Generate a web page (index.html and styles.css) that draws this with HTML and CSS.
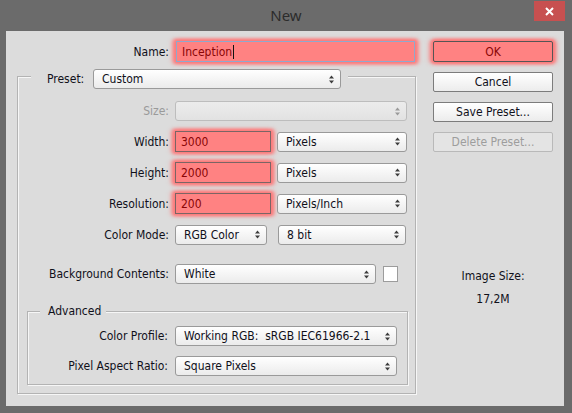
FILE: index.html
```html
<!DOCTYPE html>
<html>
<head>
<meta charset="utf-8">
<title>New</title>
<link rel="stylesheet" href="styles.css">
</head>
<body>
<div class="window">
  <div class="titlebar">
    <span></span>
    <span class="title">New</span>
    <div class="close"><svg width="9" height="9" viewBox="0 0 9 9"><path d="M1 1 L8 8 M8 1 L1 8" stroke="#fff" stroke-width="2"/></svg></div>
  </div>
  <div class="panel">
    <div class="left">
      <div class="row name-row">
        <span class="lbl lbl-name">Name:</span>
        <div class="field hl name-field">Inception<span class="caret"></span></div>
      </div>
      <div class="group preset-group">
        <div class="legend preset-legend">
          <span class="lbl-preset">Preset:</span>
          <div class="select sel-preset"><span>Custom</span><svg class="arr" width="5" height="9" viewBox="0 0 5 9"><path d="M0 3.5 L2.5 0.5 L5 3.5Z M0 5.5 L2.5 8.5 L5 5.5Z"/></svg></div>
        </div>
        <div class="rows">
          <div class="row r20">
            <span class="lbl lbl-g disabled">Size:</span>
            <div class="select sel-size is-disabled"><span></span><svg class="arr" width="5" height="9" viewBox="0 0 5 9"><path d="M0 3.5 L2.5 0.5 L5 3.5Z M0 5.5 L2.5 8.5 L5 5.5Z"/></svg></div>
          </div>
          <div class="row r21">
            <span class="lbl lbl-g">Width:</span>
            <div class="field hl num">3000</div>
            <div class="select sel-unit"><span>Pixels</span><svg class="arr" width="5" height="9" viewBox="0 0 5 9"><path d="M0 3.5 L2.5 0.5 L5 3.5Z M0 5.5 L2.5 8.5 L5 5.5Z"/></svg></div>
          </div>
          <div class="row r21">
            <span class="lbl lbl-g">Height:</span>
            <div class="field hl num">2000</div>
            <div class="select sel-unit"><span>Pixels</span><svg class="arr" width="5" height="9" viewBox="0 0 5 9"><path d="M0 3.5 L2.5 0.5 L5 3.5Z M0 5.5 L2.5 8.5 L5 5.5Z"/></svg></div>
          </div>
          <div class="row r21">
            <span class="lbl lbl-g">Resolution:</span>
            <div class="field hl num">200</div>
            <div class="select sel-unit"><span>Pixels/Inch</span><svg class="arr" width="5" height="9" viewBox="0 0 5 9"><path d="M0 3.5 L2.5 0.5 L5 3.5Z M0 5.5 L2.5 8.5 L5 5.5Z"/></svg></div>
          </div>
          <div class="row r21">
            <span class="lbl lbl-g">Color Mode:</span>
            <div class="select sel-mode"><span>RGB Color</span><svg class="arr" width="5" height="9" viewBox="0 0 5 9"><path d="M0 3.5 L2.5 0.5 L5 3.5Z M0 5.5 L2.5 8.5 L5 5.5Z"/></svg></div>
            <div class="select sel-bit"><span>8 bit</span><svg class="arr" width="5" height="9" viewBox="0 0 5 9"><path d="M0 3.5 L2.5 0.5 L5 3.5Z M0 5.5 L2.5 8.5 L5 5.5Z"/></svg></div>
          </div>
          <div class="row r20 bg-row">
            <span class="lbl lbl-g">Background Contents:</span>
            <div class="select sel-bg"><span>White</span><svg class="arr" width="5" height="9" viewBox="0 0 5 9"><path d="M0 3.5 L2.5 0.5 L5 3.5Z M0 5.5 L2.5 8.5 L5 5.5Z"/></svg></div>
            <div class="swatch"></div>
          </div>
        </div>
        <div class="group adv-group">
          <div class="legend adv-legend">Advanced</div>
          <div class="rows adv-rows">
            <div class="row r20">
              <span class="lbl lbl-a">Color Profile:</span>
              <div class="select sel-adv"><span class="pre">Working RGB:  sRGB IEC61966-2.1</span><svg class="arr" width="5" height="9" viewBox="0 0 5 9"><path d="M0 3.5 L2.5 0.5 L5 3.5Z M0 5.5 L2.5 8.5 L5 5.5Z"/></svg></div>
            </div>
            <div class="row r20">
              <span class="lbl lbl-a">Pixel Aspect Ratio:</span>
              <div class="select sel-adv"><span>Square Pixels</span><svg class="arr" width="5" height="9" viewBox="0 0 5 9"><path d="M0 3.5 L2.5 0.5 L5 3.5Z M0 5.5 L2.5 8.5 L5 5.5Z"/></svg></div>
            </div>
          </div>
        </div>
      </div>
    </div>
    <div class="right">
      <div class="btn btn-ok hl">OK</div>
      <div class="btn">Cancel</div>
      <div class="btn">Save Preset...</div>
      <div class="btn btn-disabled">Delete Preset...</div>
      <div class="size-title">Image Size:</div>
      <div class="size-value">17,2M</div>
    </div>
  </div>
</div>
</body>
</html>
```
FILE: styles.css
```css
* { box-sizing: border-box; }
html, body { margin: 0; padding: 0; }
body {
  width: 572px;
  height: 413px;
  background: #6b6b6b;
  font-family: "DejaVu Sans Condensed", "DejaVu Sans", sans-serif;
  font-stretch: condensed;
  font-size: 12px;
  color: #10101a;
  overflow: hidden;
}
.window {
  display: flex;
  flex-direction: column;
  height: 413px;
}
.titlebar {
  height: 31px;
  display: grid;
  grid-template-columns: 1fr auto 1fr;
  flex: none;
}
.title {
  font-family: "Noto Sans", "Open Sans", sans-serif;
  font-stretch: normal;
  font-size: 15px;
  line-height: 30px;
  color: #2c2c2c;
}
.close {
  justify-self: end;
  align-self: start;
  margin: 1px 7px 0 0;
  width: 31px;
  height: 20px;
  background: #c75050;
  display: flex;
  align-items: center;
  justify-content: center;
}
.panel {
  flex: 1;
  margin: 0 8px 7px 6px;
  background: #dcdcdc;
  display: flex;
  padding: 10px 11px 0 11px;
}
.left {
  width: 400px;
  margin-right: 16px;
  flex: none;
}
.right {
  width: 120px;
  flex: none;
  display: flex;
  flex-direction: column;
  align-items: center;
}
.row {
  display: flex;
  align-items: center;
}
.r20 { height: 20px; }
.r21 { height: 21px; }
.lbl {
  text-align: right;
  white-space: nowrap;
  flex: none;
}
.lbl-name { width: 152px; margin-right: 7px; }
.lbl-g { width: 151px; margin-right: 6px; }
.lbl-a { width: 140px; margin-right: 7px; }
.disabled { color: #9a9a9a; }

.field {
  height: 21px;
  border: 1px solid #7b6565;
  background: #fff;
  display: flex;
  align-items: center;
  padding-left: 5px;
  flex: none;
}
.name-field {
  width: 239px;
  border-color: #8fa9cc;
}
.caret {
  display: inline-block;
  width: 1px;
  height: 14px;
  background: #111;
  margin-left: 1px;
}
.num { width: 96px; margin-right: 6px; }
.hl {
  background: #ff8282;
  color: #8a0606;
  box-shadow: 0 0 3px 2px rgba(255, 118, 118, 0.85), -3px 0 4px 1px rgba(255, 118, 118, 0.7), 3px 0 4px 1px rgba(255, 118, 118, 0.7);
}

.group {
  border: 1px solid #b3b3b3;
  box-shadow: inset 1px 1px 0 #f6f6f6, 1px 1px 0 #f6f6f6;
}
.preset-group {
  width: 399px;
  margin-top: 14px;
  padding-bottom: 0;
}
.legend {
  background: #dcdcdc;
  align-self: flex-start;
}
.preset-legend {
  display: flex;
  align-items: center;
  width: max-content;
  height: 20px;
  margin: -8px 0 0 13px;
  padding: 0 7px 0 16px;
}
.lbl-preset {
  width: 41px;
  margin-right: 5px;
  white-space: nowrap;
}
.rows {
  display: flex;
  flex-direction: column;
  gap: 10px;
  padding-top: 12px;
}
.bg-row { margin-top: 9px; }

.select {
  height: 20px;
  border: 1px solid #9a9a9a;
  border-radius: 3px;
  background: linear-gradient(#ffffff, #ebebeb);
  display: flex;
  align-items: center;
  justify-content: space-between;
  padding: 0 6px 0 8px;
  flex: none;
  white-space: nowrap;
}
.select .arr { fill: #3c3c3c; flex: none; }
.pre { white-space: pre; }
.is-disabled {
  border-color: #bdbdbd;
  background: linear-gradient(#ececec, #e2e2e2);
}
.is-disabled .arr { fill: #9a9a9a; }
.sel-preset { width: 248px; }
.sel-size { width: 232px; }
.sel-unit { width: 130px; }
.sel-mode { width: 92px; margin-right: 11px; }
.sel-bit { width: 128px; }
.sel-bg { width: 201px; margin-right: 7px; }
.swatch {
  width: 15px;
  height: 16px;
  background: #fff;
  border: 1px solid #9c9c9c;
}

.adv-group {
  margin: 27px 7px 8px 9px;
  padding-bottom: 8px;
}
.adv-legend {
  width: max-content;
  height: 14px;
  line-height: 14px;
  margin: -8px 0 0 12px;
  padding: 0 5px 0 8px;
}
.adv-rows { padding-top: 8px; }
.sel-adv { width: 222px; }

.btn {
  width: 120px;
  height: 20px;
  border: 1px solid #7c7c7c;
  border-radius: 2px;
  background: linear-gradient(#ffffff, #ececec);
  display: flex;
  align-items: center;
  justify-content: center;
  margin-bottom: 10px;
  flex: none;
}
.btn-ok {
  height: 21px;
  margin-top: 0;
  border-color: #555;
  background: #ff8282;
}
.btn-disabled {
  border-color: #b9b9b9;
  background: #e4e4e4;
  color: #9d9d9d;
  margin-bottom: 0;
}
.size-title {
  margin-top: 117px;
  line-height: 14px;
}
.size-value {
  margin-top: 9px;
  line-height: 14px;
}
```
